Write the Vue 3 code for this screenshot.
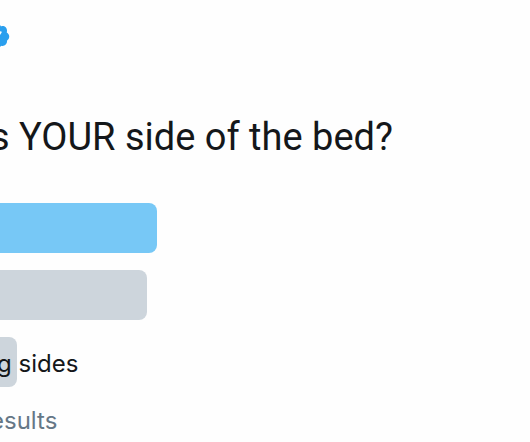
<script setup>
const options = [
  { id: 'first', label: '', share: 29.6, leading: true },
  { id: 'second', label: '', share: 27.7, leading: false },
  { id: 'third', label: 'g sides', share: 3.2, leading: false },
]
</script>

<template>
  <main class="poll">
    <svg class="badge" viewBox="0 0 24 24" role="img" aria-label="Verified account">
      <path d="M22.5 12.5c0-1.58-.875-2.95-2.148-3.6.154-.435.238-.905.238-1.4 0-2.21-1.71-3.998-3.818-3.998-.47 0-.92.084-1.336.25C14.818 2.415 13.51 1.5 12 1.5s-2.816.917-3.437 2.25c-.415-.165-.866-.25-1.336-.25-2.11 0-3.818 1.79-3.818 4 0 .494.083.964.237 1.4-1.272.65-2.147 2.018-2.147 3.6 0 1.495.782 2.798 1.942 3.486-.02.17-.032.34-.032.514 0 2.21 1.708 4 3.818 4 .47 0 .92-.086 1.335-.25.62 1.334 1.926 2.25 3.437 2.25 1.512 0 2.818-.916 3.437-2.25.415.163.865.248 1.336.248 2.11 0 3.818-1.79 3.818-4 0-.174-.012-.344-.033-.513 1.158-.687 1.943-1.99 1.943-3.484zm-6.616-3.334l-4.334 6.5c-.145.217-.382.334-.625.334-.143 0-.288-.04-.416-.126l-.115-.094-2.415-2.415c-.293-.293-.293-.768 0-1.06s.768-.294 1.06 0l1.77 1.767 3.825-5.74c.23-.345.696-.436 1.04-.207.346.23.44.696.21 1.04z" />
    </svg>
    <h1 class="question">s YOUR side of the bed?</h1>
    <ul class="options">
      <li v-for="option in options" :key="option.id" class="option">
        <span class="bar" :class="{ leading: option.leading }" :style="{ width: option.share + '%' }"></span>
        <span v-if="option.label" class="label">{{ option.label }}</span>
      </li>
    </ul>
    <a class="results" href="#">esults</a>
  </main>
</template>

<style>
body {
  margin: 0;
  background: #fefefe;
}
</style>

<style scoped>
.poll {
  display: flex;
  flex-direction: column;
  align-items: flex-start;
  padding-top: 22px;
  overflow: hidden;
  font-family: Inter, "Liberation Sans", sans-serif;
  color: #14171a;
}

.badge {
  width: 28px;
  height: 28px;
  margin-left: -17px;
  fill: #2a9fee;
}

.question {
  margin: 63px 0 0 -10px;
  font-family: Roboto, "Liberation Sans", sans-serif;
  font-size: 38px;
  font-weight: 400;
  line-height: 48px;
  white-space: nowrap;
}

.options {
  display: flex;
  flex-direction: column;
  gap: 17px;
  width: 100%;
  margin: 42px 0 0;
  padding: 0;
  list-style: none;
}

.option {
  display: grid;
  align-items: center;
  height: 50px;
}

.bar,
.label {
  grid-area: 1 / 1;
}

.bar {
  height: 100%;
  border-radius: 0 8px 8px 0;
  background: #cdd5dc;
}

.bar.leading {
  background: #77c8f6;
}

.label {
  margin-left: -3px;
  padding-top: 4px;
  font-size: 24px;
  line-height: 32px;
  white-space: nowrap;
}

.results {
  margin: 18px 0 0 -10px;
  font-size: 24px;
  line-height: 32px;
  color: #657786;
  text-decoration: none;
}
</style>
